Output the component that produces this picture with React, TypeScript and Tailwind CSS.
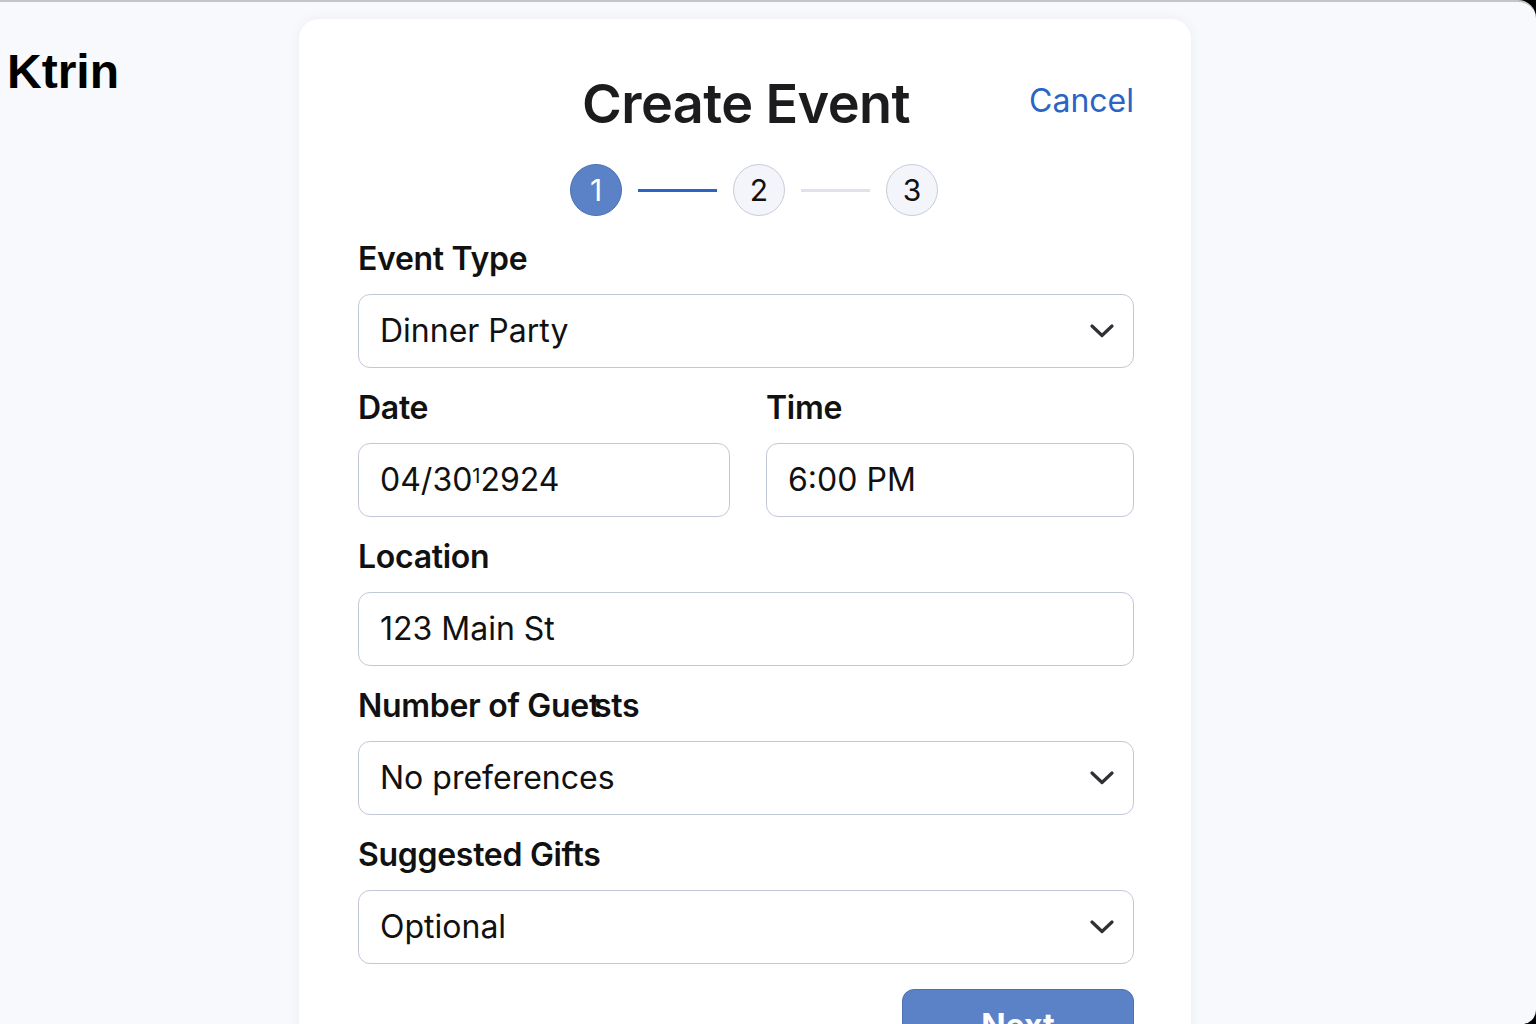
import { ReactNode } from 'react'

const inter = "font-['Inter','Noto_Sans',sans-serif]"

function Chevron() {
  return (
    <svg width="24" height="14" viewBox="0 0 24 14" fill="none" className="shrink-0">
      <polyline points="2,2 12,11.5 22,2" stroke="#2f3136" strokeWidth="3.2" strokeLinecap="round" strokeLinejoin="round" />
    </svg>
  )
}

function Field({ label, children, select = false }: { label: ReactNode; children: ReactNode; select?: boolean }) {
  return (
    <div>
      <div className="text-[32px] leading-[40px] font-semibold text-[#111] mb-[15px] tracking-[-0.3px]">{label}</div>
      <div className="h-[74px] rounded-[12px] border border-[#c3c8d6] bg-white flex items-center justify-between pl-[21px] pr-[19px] text-[32px] text-[#111]">
        <span>{children}</span>
        {select && <Chevron />}
      </div>
    </div>
  )
}

function Step({ n, active = false }: { n: number; active?: boolean }) {
  return (
    <div
      className={
        active
          ? 'w-[52px] h-[52px] rounded-full bg-[#5b82c6] border border-[#4a70b6] text-white flex items-center justify-center text-[30px]'
          : 'w-[52px] h-[52px] rounded-full bg-[#f3f5fa] border border-[#c6ccda] text-[#111] flex items-center justify-center text-[30px]'
      }
    >
      {n}
    </div>
  )
}

export default function App() {
  return (
    <div className="h-[1024px] w-[1536px] bg-black overflow-hidden">
      <div className={`h-full w-full bg-[#f8f9fc] border-t-2 border-[#c4c4c4] rounded-tr-[18px] rounded-br-[14px] flex ${inter}`}>
        {/* Brand */}
        <div className="w-[299px] shrink-0 pl-[7px] pt-[40px]">
          <div className="font-['Liberation_Sans',Arial,sans-serif] font-bold text-[48px] leading-[60px] text-black">Ktrin</div>
        </div>

        {/* Card */}
        <div className="w-[892px] mt-[17px] bg-white rounded-[20px] shadow-[0_0_14px_rgba(20,30,60,0.05)] pl-[59px] pr-[57px] pt-[53px] pb-[60px] h-fit">
          <div className="relative flex justify-center items-center h-[64px]">
            <h1 className="text-[54px] leading-[64px] font-semibold text-[#1c1c1e] tracking-[-0.6px]">Create Event</h1>
            <button className="absolute right-0 top-[9px] text-[32px] leading-[40px] text-[#2a64c4]">Cancel</button>
          </div>

          <div className="flex items-center justify-center mt-[28px] ml-[16px]">
            <Step n={1} active />
            <div className="w-[79px] h-[3px] bg-[#2d63c4] mx-[16px]" />
            <Step n={2} />
            <div className="w-[69px] h-[3px] bg-[#dfe2ec] mx-[16px]" />
            <Step n={3} />
          </div>

          <div className="mt-[23px] flex flex-col gap-[20px]">
            <Field label="Event Type" select>Dinner Party</Field>

            <div className="grid grid-cols-[372px_1fr] gap-[36px]">
              <Field label="Date">
                04/30<span className="text-[20px] align-[8px]">1</span>2924
              </Field>
              <Field label="Time">6:00 PM</Field>
            </div>

            <Field label="Location">123 Main St</Field>

            <Field
              label={
                <>
                  Number of Gue<span className="inline-block -mr-[6px]">t</span>sts
                </>
              }
              select
            >
              No preferences
            </Field>

            <Field label="Suggested Gifts" select>Optional</Field>
          </div>

          <div className="flex justify-end mt-[25px]">
            <button className="w-[232px] h-[74px] rounded-[12px] bg-[#5b82c6] border border-[#4a70b6] text-white text-[32px] font-bold">
              Next
            </button>
          </div>
        </div>
      </div>
    </div>
  )
}
